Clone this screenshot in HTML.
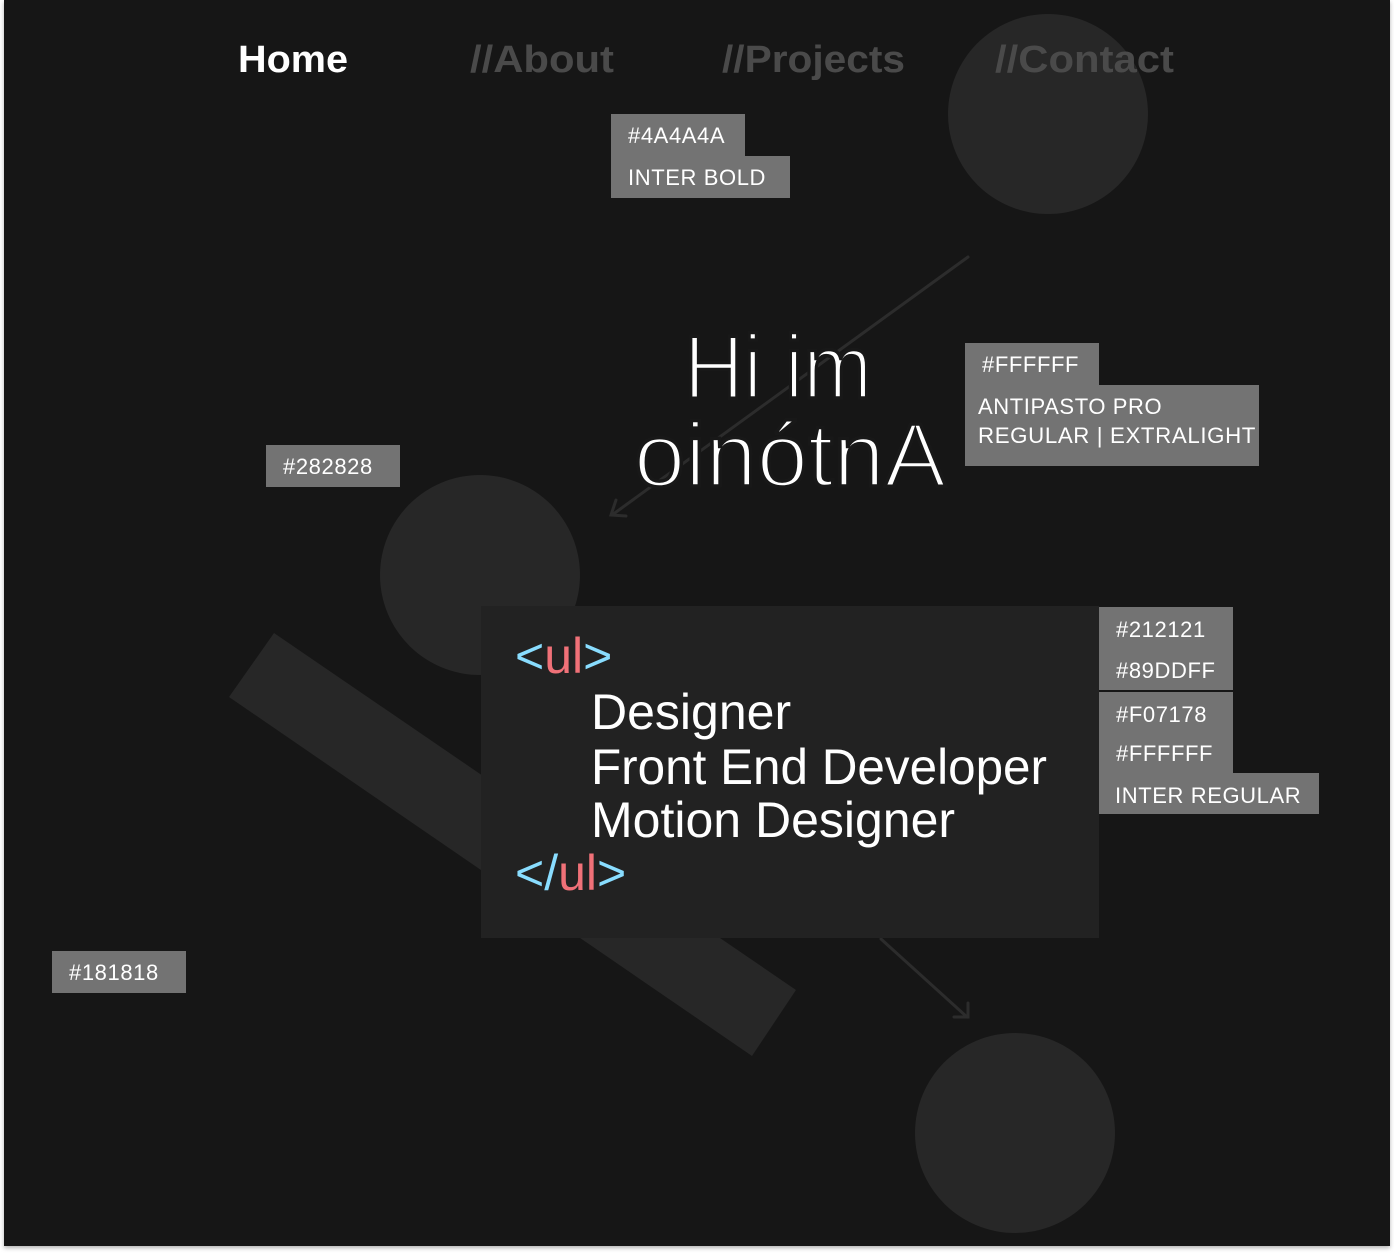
<!DOCTYPE html>
<html><head><meta charset="utf-8"><style>
html,body{margin:0;padding:0;background:#fff;width:1394px;height:1254px;overflow:hidden}
svg{display:block}
</style></head><body>
<svg width="1394" height="1254" viewBox="0 0 1394 1254" xmlns="http://www.w3.org/2000/svg" font-family="Liberation Sans, sans-serif">
<defs><filter id="sh" x="-5%" y="-5%" width="110%" height="110%"><feDropShadow dx="0" dy="2" stdDeviation="2" flood-color="#000" flood-opacity="0.3"/></filter></defs>
<rect x="4" y="0" width="1386" height="1246" fill="#181818" filter="url(#sh)"/>
<circle cx="1048" cy="114" r="100" fill="#272727"/>
<circle cx="480" cy="575" r="100" fill="#272727"/>
<circle cx="1015" cy="1133" r="100" fill="#272727"/>
<polygon points="274,633 229,697 752,1056 796,990" fill="#272727"/>
<g stroke="#2c2c2c" stroke-width="3" fill="none" stroke-linecap="round">
<line x1="968" y1="257" x2="612" y2="515"/><polyline points="616,500 611,515 626,516"/>
<line x1="881" y1="939" x2="967" y2="1017"/><polyline points="968,1003 968,1017 954,1017"/>
</g>
<rect x="481" y="606" width="618" height="332" fill="#222222"/>
<g font-weight="bold" font-size="38">
<text x="238" y="72" fill="#fff" textLength="110" lengthAdjust="spacingAndGlyphs">Home</text>
<text x="470" y="72" fill="#4a4a4a" textLength="144" lengthAdjust="spacingAndGlyphs">//About</text>
<text x="722" y="72" fill="#4a4a4a" textLength="183" lengthAdjust="spacingAndGlyphs">//Projects</text>
<text x="995" y="72" fill="#4a4a4a" textLength="179" lengthAdjust="spacingAndGlyphs">//Contact</text>
</g>
<g fill="#fff" font-size="90" font-weight="normal" stroke="#181818" stroke-width="3.5">
<text x="684" y="398" textLength="188" lengthAdjust="spacingAndGlyphs">Hi im</text>
<text x="634" y="486" textLength="312" lengthAdjust="spacingAndGlyphs">oinótnA</text>
</g>
<g font-size="50">
<text x="515" y="673"><tspan fill="#89ddff">&lt;</tspan><tspan fill="#f07178">ul</tspan><tspan fill="#89ddff">&gt;</tspan></text>
<text x="591" y="729" fill="#fff">Designer</text>
<text x="591" y="784" fill="#fff" textLength="456" lengthAdjust="spacingAndGlyphs">Front End Developer</text>
<text x="591" y="837" fill="#fff">Motion Designer</text>
<text x="515" y="890"><tspan fill="#89ddff">&lt;/</tspan><tspan fill="#f07178">ul</tspan><tspan fill="#89ddff">&gt;</tspan></text>
</g>
<g fill="#737373">
<rect x="611" y="114" width="134" height="42"/><rect x="611" y="156" width="179" height="42"/>
<rect x="965" y="343" width="134" height="42"/><rect x="965" y="385" width="294" height="81"/>
<rect x="266" y="445" width="134" height="42"/>
<rect x="52" y="951" width="134" height="42"/>
<rect x="1099" y="607" width="134" height="83"/>
<rect x="1099" y="692" width="134" height="82"/><rect x="1099" y="773" width="220" height="41"/>
</g>
<g fill="#fff" font-size="22" letter-spacing="0.6">
<text x="628" y="143">#4A4A4A</text>
<text x="628" y="185">INTER BOLD</text>
<text x="982" y="372">#FFFFFF</text>
<text x="978" y="414">ANTIPASTO PRO</text>
<text x="978" y="443" textLength="278" lengthAdjust="spacingAndGlyphs">REGULAR | EXTRALIGHT</text>
<text x="283" y="474">#282828</text>
<text x="69" y="980">#181818</text>
<text x="1116" y="637">#212121</text>
<text x="1116" y="678">#89DDFF</text>
<text x="1116" y="722">#F07178</text>
<text x="1116" y="761">#FFFFFF</text>
<text x="1115" y="803">INTER REGULAR</text>
</g>
</svg>
</body></html>
